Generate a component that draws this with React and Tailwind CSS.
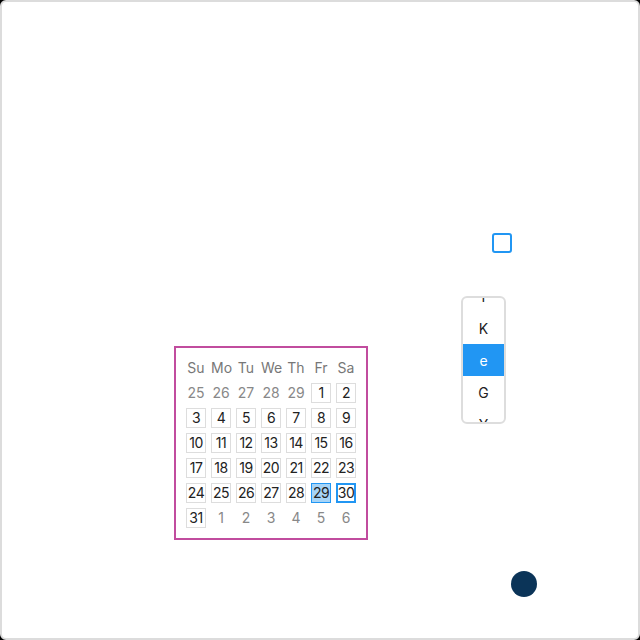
import { useState } from 'react';

const weeks = [
  [25, 26, 27, 28, 29, 1, 2],
  [3, 4, 5, 6, 7, 8, 9],
  [10, 11, 12, 13, 14, 15, 16],
  [17, 18, 19, 20, 21, 22, 23],
  [24, 25, 26, 27, 28, 29, 30],
  [31, 1, 2, 3, 4, 5, 6],
];

const days = ['Su', 'Mo', 'Tu', 'We', 'Th', 'Fr', 'Sa'];
const letters = ['I', 'K', 'e', 'G', 'Y'];

const Calendar = () => {
  const [selected] = useState(29);

  return (
    <div className="absolute left-[172px] top-[344px] border-2 border-[#c14c9e] bg-white p-[10px]">
      <div className="grid grid-cols-[repeat(7,20px)] gap-[5px] text-[14px] leading-[20px]">
        {days.map(d => (
          <div key={d} className="h-5 text-center text-[#777]">{d}</div>
        ))}
        {weeks.map((week, wi) =>
          week.map((n, di) => {
            const outside = (wi === 0 && n > 20) || (wi === 5 && n < 20);
            if (outside) {
              return <div key={`${wi}-${di}`} className="h-5 text-center text-[#888]">{n}</div>;
            }
            let cls = 'border border-[#ddd] bg-white text-[#222]';
            if (n === selected) cls = 'border border-[#2196f3] bg-[#a6d4f7] text-[#222]';
            if (n === 30) cls = 'border-2 border-[#2196f3] bg-white text-[#222]';
            return (
              <div key={`${wi}-${di}`} className={`flex h-5 w-5 items-center justify-center tracking-[-0.5px] ${cls}`}>
                {n}
              </div>
            );
          })
        )}
      </div>
    </div>
  );
};

// scrolled list: first and last letters are half out of view, as in the picture
const LetterList = () => (
  <div className="absolute left-[459px] top-[294px] h-[128px] w-[45px] overflow-hidden rounded-[6px] border-2 border-[#ddd] bg-white">
    <div className="-mt-[18px] flex flex-col">
      {letters.map(l => (
        <div
          key={l}
          className={`flex h-8 items-center justify-center text-[14px] ${l === 'e' ? 'bg-[#2196f3] text-white' : 'text-[#222]'}`}
        >
          {l}
        </div>
      ))}
    </div>
  </div>
);

export default function App() {
  return (
    <div className="bg-black" style={{ fontFamily: '"Inter", "Liberation Sans", sans-serif' }}>
      <div className="relative h-[640px] w-[640px] rounded-[6px] border-2 border-[#dcdcdc] bg-white">
        <div className="absolute left-[490px] top-[231px] h-5 w-5 rounded-[3px] border-2 border-[#2196f3] bg-white" />
        <LetterList />
        <Calendar />
        <div className="absolute left-[509px] top-[569px] h-[26px] w-[26px] rounded-full bg-[#0b3458]" />
      </div>
    </div>
  );
}
